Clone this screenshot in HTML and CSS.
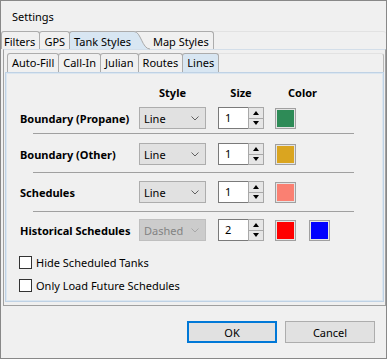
FILE: index.html
```html
<!DOCTYPE html>
<html lang="en">
<head>
  <meta charset="UTF-8">
  <title>Settings</title>
  <link rel="stylesheet" href="styles.css">
</head>
<body>

<div class="window">
  <div class="titlebar">Settings</div>

  <div class="tabs outer-tabs">
    <div class="tab first">Filters</div>
    <div class="tab">GPS</div>
    <div class="tab active curved">Tank Styles
      <svg class="curve" width="16" height="19" viewBox="0 0 16 19">
        <path d="M0,0.5 C7,0.5 8,18 16,18 L0,18 Z" fill="#d8e6f2"/>
        <path d="M0,0.5 C7,0.5 8,18 16,18" fill="none" stroke="#a9a9a9"/>
      </svg>
    </div>
    <div class="tab map">Map Styles</div>
    <div class="strip-end"></div>
  </div>

  <div class="pane outer-pane">
    <div class="tabs inner-tabs">
      <div class="tab">Auto-Fill</div>
      <div class="tab">Call-In</div>
      <div class="tab">Julian</div>
      <div class="tab">Routes</div>
      <div class="tab active">Lines</div>
      <div class="strip-end"></div>
    </div>

    <div class="pane inner-pane">
      <div class="row head">
        <span></span>
        <span class="h-style">Style</span>
        <span class="h-size">Size</span>
        <span class="h-color">Color</span>
      </div>

      <div class="row r1">
        <span class="label">Boundary (Propane)</span>
        <div class="select"><span>Line</span><svg width="8" height="5"><polyline points="0.5,0.5 4,4 7.5,0.5" fill="none" stroke="#606060"/></svg></div>
        <div class="spin"><div class="spin-text">1</div><div class="spin-btns"><div class="spin-btn"><i class="up"></i></div><div class="spin-btn"><i class="down"></i></div></div></div>
        <div class="swatches"><div class="swatch" style="background:#2e8b57"></div></div>
      </div>
      <div class="sep s1"></div>

      <div class="row r2">
        <span class="label">Boundary (Other)</span>
        <div class="select"><span>Line</span><svg width="8" height="5"><polyline points="0.5,0.5 4,4 7.5,0.5" fill="none" stroke="#606060"/></svg></div>
        <div class="spin"><div class="spin-text">1</div><div class="spin-btns"><div class="spin-btn"><i class="up"></i></div><div class="spin-btn"><i class="down"></i></div></div></div>
        <div class="swatches"><div class="swatch" style="background:#daa520"></div></div>
      </div>
      <div class="sep s2"></div>

      <div class="row r3">
        <span class="label">Schedules</span>
        <div class="select"><span>Line</span><svg width="8" height="5"><polyline points="0.5,0.5 4,4 7.5,0.5" fill="none" stroke="#606060"/></svg></div>
        <div class="spin"><div class="spin-text">1</div><div class="spin-btns"><div class="spin-btn"><i class="up"></i></div><div class="spin-btn"><i class="down"></i></div></div></div>
        <div class="swatches"><div class="swatch" style="background:#fa8072"></div></div>
      </div>
      <div class="sep s3"></div>

      <div class="row r4">
        <span class="label">Historical Schedules</span>
        <div class="select disabled"><span>Dashed</span><svg width="8" height="5"><polyline points="0.5,0.5 4,4 7.5,0.5" fill="none" stroke="#a8a8a8"/></svg></div>
        <div class="spin"><div class="spin-text">2</div><div class="spin-btns"><div class="spin-btn"><i class="up"></i></div><div class="spin-btn"><i class="down"></i></div></div></div>
        <div class="swatches"><div class="swatch" style="background:#ff0000"></div><div class="swatch" style="background:#0000ff"></div></div>
      </div>

      <label class="check c1"><span class="box"></span>Hide Scheduled Tanks</label>
      <label class="check c2"><span class="box"></span>Only Load Future Schedules</label>
    </div>
  </div>

  <div class="buttons">
    <button class="btn default">OK</button>
    <button class="btn">Cancel</button>
  </div>
</div>

</body>
</html>
```

FILE: styles.css
```css
body {
  margin: 0;
  background: #ffffff;
  font-family: "Noto Sans", sans-serif;
  font-size: 11px;
  color: #000;
}
.window {
  width: 387px;
  height: 359px;
  box-sizing: border-box;
  border: 1px solid #888;
  background: #f0f0f0;
  display: flex;
  flex-direction: column;
  overflow: hidden;
}
.titlebar {
  height: 28px;
  padding: 2px 0 0 11px;
  line-height: 28px;
}

/* tab strips */
.tabs {
  display: flex;
  align-items: flex-end;
}
.tab {
  position: relative;
  border: 1px solid #acacac;
  border-bottom: none;
  border-radius: 3px 3px 0 0;
  margin-right: -1px;
  padding: 0 4px;
  line-height: 15px;
  background: #f0f0f0;
  white-space: nowrap;
}
.tab.active {
  background: #d8e6f2;
  z-index: 2;
}
.outer-tabs .tab {
  padding-top: 2px;
}
.outer-tabs .tab.first {
  padding-left: 2px;
}
.outer-tabs .curved {
  border-right: none;
  border-top-right-radius: 0;
  padding-right: 3px;
  margin-right: 0;
}
.curve {
  position: absolute;
  left: 100%;
  top: -1px;
}
.outer-tabs .map {
  border-left: none;
  padding-left: 19px;
  padding-right: 4px;
}
.inner-tabs {
  margin-left: 3px;
}
.inner-tabs .tab {
  padding-top: 1px;
  padding-bottom: 2px;
}
.strip-end {
  flex: 1;
  align-self: stretch;
  border-top: 1px solid #e2e2e2;
  border-right: 1px solid #b8b8b8;
  border-top-right-radius: 3px;
  margin-left: 1px;
}
.outer-tabs .strip-end {
  border-right: none;
}
.inner-tabs .strip-end {
  margin-right: 1px;
}

/* panes */
.outer-pane {
  height: 257px;
  box-sizing: border-box;
  margin-left: 2px;
  border: 1px solid #a0a0a0;
  border-top-color: #d3dee9;
  padding: 3px 0 3px 0;
  display: flex;
  flex-direction: column;
}
.inner-pane {
  flex: 1;
  margin: 0 1px 0 1px;
  border: 1px solid #bfd2e5;
  box-shadow: inset 0 0 0 1px #dbe6f0;
  padding: 12px 0 0 14px;
}

/* settings rows */
.row {
  display: grid;
  grid-template-columns: 119px 79px 57px auto;
  align-items: center;
  height: 22px;
}
.row.head {
  height: 16px;
  font-weight: bold;
  line-height: 16px;
}
.h-style { width: 67px; text-align: center; }
.h-size { width: 46px; text-align: center; }
.h-color { width: 55px; text-align: center; }
.label {
  font-weight: bold;
}
.r1 { margin-top: 6px; }
.r2 { margin-top: 9px; }
.r3 { margin-top: 8px; }
.r4 { margin-top: 7px; }
.sep {
  width: 321px;
  margin-left: 13px;
  border-top: 1px solid #a0a0a0;
}
.s1 { margin-top: 4px; }
.s2 { margin-top: 7px; }
.s3 { margin-top: 8px; }

.select {
  width: 67px;
  height: 22px;
  box-sizing: border-box;
  border: 1px solid #adadad;
  background: #e1e1e1;
  display: flex;
  align-items: center;
  justify-content: space-between;
  padding: 0 6px 0 4px;
}
.select.disabled {
  background: #cccccc;
  border-color: #bfbfbf;
  color: #838383;
}
.spin {
  width: 46px;
  height: 22px;
  display: flex;
}
.spin-text {
  flex: 1;
  background: #fff;
  border: 1px solid #7a7a7a;
  border-right: none;
  padding-left: 6px;
  line-height: 20px;
}
.spin-btns {
  width: 14px;
  border: 1px solid #a8a8a8;
  display: flex;
  flex-direction: column;
}
.spin-btn {
  flex: 1;
  background: #e6e6e6;
  display: flex;
  align-items: center;
  justify-content: center;
}
.spin-btn + .spin-btn {
  border-top: 1px solid #a8a8a8;
}
.up {
  border-left: 3px solid transparent;
  border-right: 3px solid transparent;
  border-bottom: 4px solid #000;
}
.down {
  border-left: 3px solid transparent;
  border-right: 3px solid transparent;
  border-top: 4px solid #000;
}
.swatches {
  display: flex;
  gap: 13px;
}
.swatch {
  width: 21px;
  height: 21px;
  box-sizing: border-box;
  border: 1px solid #a0a0a0;
  box-shadow: inset 0 0 0 1px #e4e4e4;
}

.check {
  display: flex;
  align-items: center;
  gap: 4px;
  height: 15px;
  margin-left: -1px;
}
.c1 { margin-top: 14px; }
.c2 { margin-top: 8px; }
.box {
  width: 13px;
  height: 13px;
  box-sizing: border-box;
  border: 1px solid #333;
  background: #fff;
}

/* dialog buttons */
.buttons {
  display: flex;
  justify-content: flex-end;
  gap: 8px;
  margin-top: 15px;
  padding-right: 11px;
}
.btn {
  width: 90px;
  height: 22px;
  font-family: "Noto Sans", sans-serif;
  font-size: 11px;
  background: #e1e1e1;
  border: 1px solid #adadad;
  padding: 0;
}
.btn.default {
  border: 2px solid #0078d7;
}
```
